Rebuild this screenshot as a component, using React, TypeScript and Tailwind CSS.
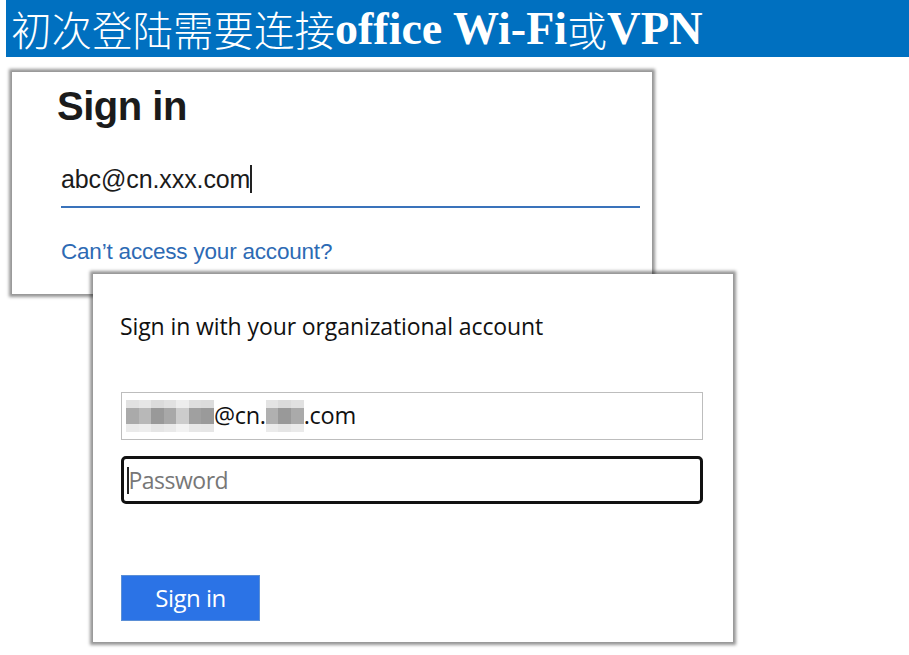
import React from "react";

const cjk = { fontFamily: '"Noto Sans CJK SC", "Liberation Serif", serif' };

function Blur({ w, cells }: { w: number; cells: string[] }) {
  return (
    <span className="inline-flex flex-col align-middle" style={{ width: w }}>
      <span className="flex h-[8px]">
        {cells.map((c, i) => (
          <span key={"a" + i} className="flex-1" style={{ background: c, opacity: 0.35 }} />
        ))}
      </span>
      <span className="flex h-[16px]">
        {cells.map((c, i) => (
          <span key={"b" + i} className="flex-1" style={{ background: c }} />
        ))}
      </span>
      <span className="flex h-[8px]">
        {cells.map((c, i) => (
          <span key={"c" + i} className="flex-1" style={{ background: c, opacity: 0.25 }} />
        ))}
      </span>
    </span>
  );
}

export default function App() {
  return (
    <div className="w-[909px] h-[655px] bg-white overflow-hidden">
      <div className="ml-[6px] h-[57px] bg-[#0070c0] flex items-center pl-[5px] text-white whitespace-nowrap">
        <span className="text-[40.5px] leading-[52px] font-light" style={cjk}>
          初次登陆需要连接
        </span>
        <span
          className="text-[46px] leading-[52px] font-bold"
          style={{ fontFamily: '"Liberation Serif", serif' }}
        >
          office Wi-Fi
        </span>
        <span className="text-[40px] leading-[52px] font-light" style={cjk}>
          或
        </span>
        <span
          className="text-[46.5px] leading-[52px] font-bold"
          style={{ fontFamily: '"Liberation Serif", serif' }}
        >
          VPN
        </span>
      </div>

      <div
        className="ml-[12px] mt-[15px] w-[640px] h-[222px] bg-white shadow-[0_0_3px_3px_rgba(0,0,0,0.42)] pl-[45px] pr-[12px] pt-[12px]"
        style={{ fontFamily: '"Liberation Sans", Arial, sans-serif' }}
      >
        <div className="text-[40px] font-bold text-[#1b1b1b] leading-[44px] tracking-[-0.5px]">Sign in</div>
        <div className="mt-[37px] ml-[4px] border-b-2 border-[#3a73bb] h-[43px] flex items-start">
          <span className="text-[25px] text-[#1b1b1b] leading-[28px] tracking-[-0.1px]">abc@cn.xxx.com</span>
          <span className="inline-block w-[1.5px] h-[28px] bg-[#222]" />
        </div>
        <div className="mt-[31px] ml-[4px] text-[22.5px] leading-[26px] text-[#2d6ab4] tracking-[-0.2px]">
          Can’t access your account?
        </div>
      </div>

      <div
        className="relative ml-[93px] -mt-[20px] w-[640px] h-[368px] bg-white shadow-[0_0_3px_3px_rgba(0,0,0,0.42)] pl-[27px] pt-[38px]"
        style={{ fontFamily: '"Open Sans", "Noto Sans", sans-serif' }}
      >
        <div className="text-[23px] leading-[28px] text-[#111] tracking-[-0.1px]">
          Sign in with your organizational account
        </div>
        <div className="mt-[52px] ml-[1px] w-[582px] h-[48px] border border-[#bdbdbd] flex items-center pl-[4px] text-[23.5px] text-[#111] tracking-[-0.3px]">
          <Blur w={88} cells={["#aaa", "#b8b8b8", "#999", "#a8a8a8", "#ccc", "#a0a0a0", "#9a9a9a"]} />
          <span>@cn.</span>
          <Blur w={38} cells={["#b0b0b0", "#999", "#aaa"]} />
          <span>.com</span>
        </div>
        <div className="mt-[16px] ml-[1px] w-[582px] h-[48px] border-[3px] border-[#111] rounded-[5px] flex items-center pl-[3px]">
          <span className="inline-block w-[1.5px] h-[27px] bg-[#222]" />
          <span className="text-[23px] text-[#777] tracking-[-0.5px]">Password</span>
        </div>
        <div className="mt-[71px] ml-[1px] w-[139px] h-[46px] bg-[#2b73e6] border border-[#5b8fd6] flex items-center justify-center text-white text-[24px] tracking-[-0.5px]">
          Sign in
        </div>
      </div>
    </div>
  );
}
